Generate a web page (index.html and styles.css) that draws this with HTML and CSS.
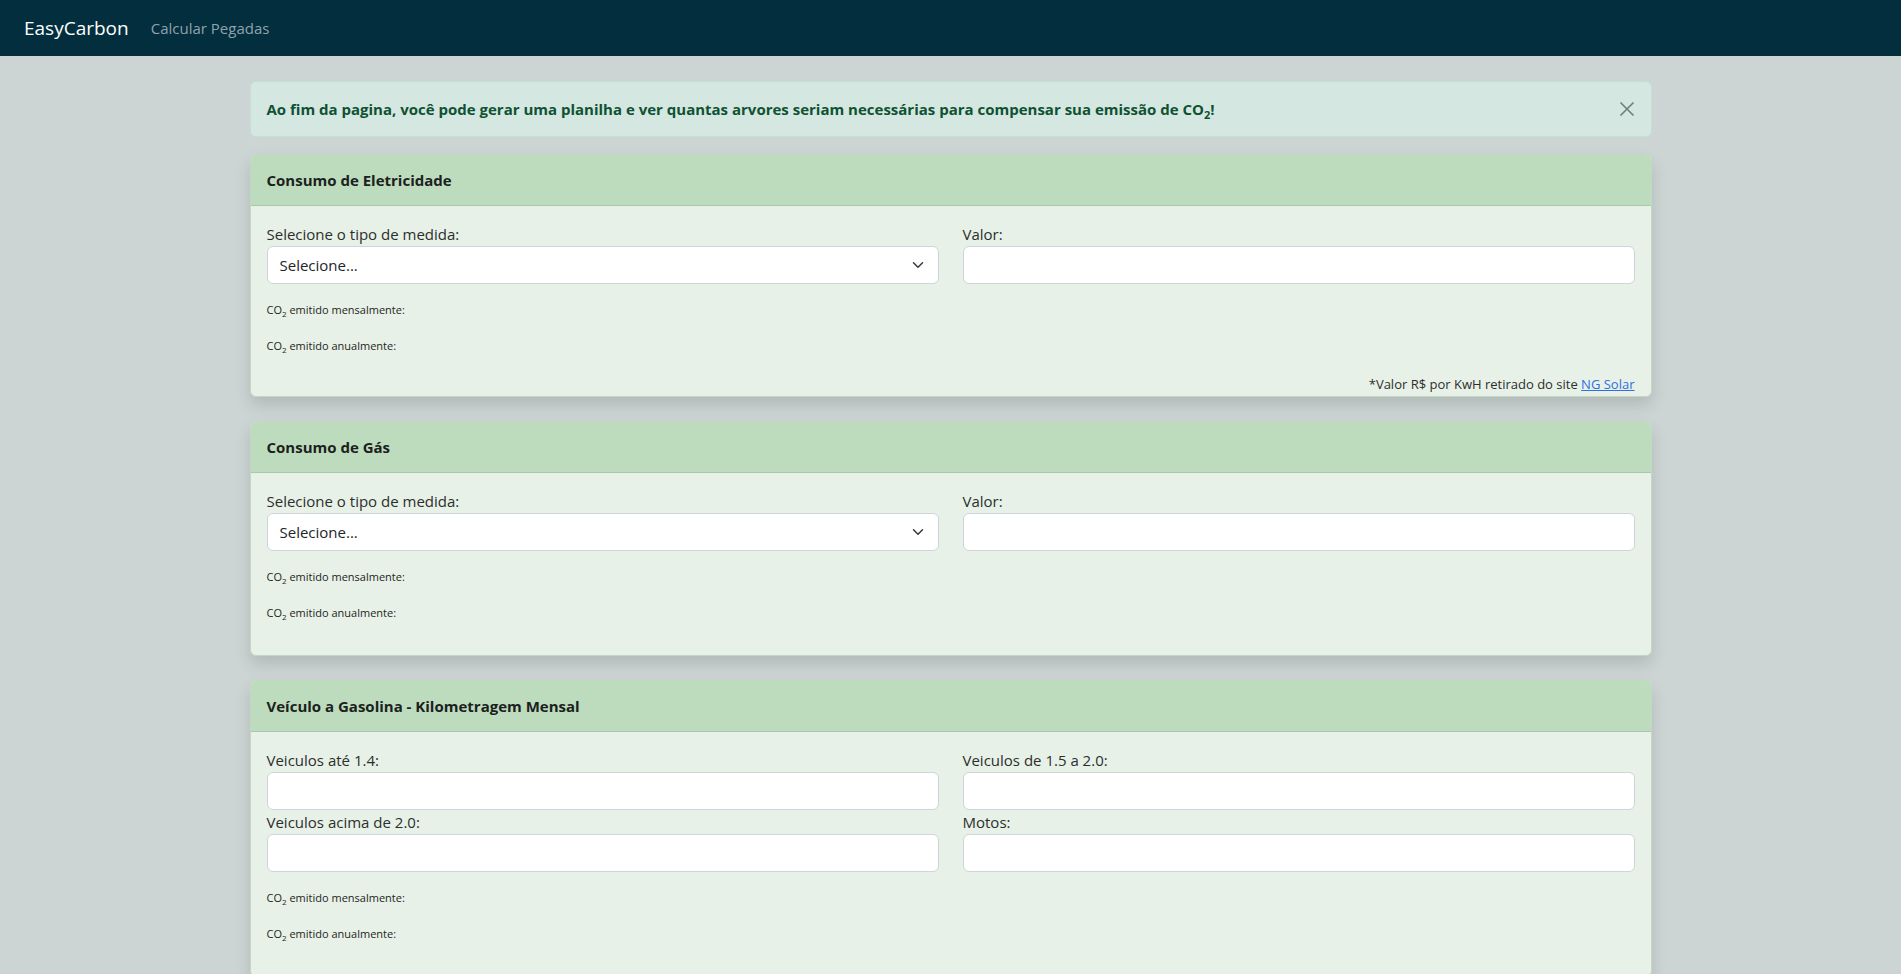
FILE: index.html
```html
<!DOCTYPE html>
<html lang="pt-BR">
<head>
<meta charset="utf-8">
<title>EasyCarbon</title>
<link rel="stylesheet" href="styles.css">
</head>
<body>
<nav class="navbar">
  <a class="brand" href="#">EasyCarbon</a>
  <a class="nav-link" href="#">Calcular Pegadas</a>
</nav>
<main class="container">
  <div class="alert">
    Ao fim da pagina, você pode gerar uma planilha e ver quantas arvores seriam necessárias para compensar sua emissão de CO<sub>2</sub>!
    <button class="btn-close" aria-label="Fechar">
      <svg width="16" height="16" viewBox="0 0 16 16"><path d="M1.5 1.5 L14.5 14.5 M14.5 1.5 L1.5 14.5" stroke="#1e2a26" stroke-width="1.6" fill="none"/></svg>
    </button>
  </div>

  <section class="card">
    <div class="card-header">Consumo de Eletricidade</div>
    <div class="card-body card-body-note">
      <div class="row">
        <div class="col">
          <label class="label">Selecione o tipo de medida:</label>
          <div class="select">Selecione...
            <svg class="chev" width="16" height="12" viewBox="0 0 16 16"><path d="M2 5l6 6 6-6" stroke="#343a40" stroke-width="2" fill="none" stroke-linecap="round" stroke-linejoin="round"/></svg>
          </div>
        </div>
        <div class="col">
          <label class="label">Valor:</label>
          <div class="input"></div>
        </div>
      </div>
      <p class="co2 first">CO<sub>2</sub> emitido mensalmente:</p>
      <p class="co2">CO<sub>2</sub> emitido anualmente:</p>
      <div class="note">*Valor R$ por KwH retirado do site <a href="#">NG Solar</a></div>
    </div>
  </section>

  <section class="card">
    <div class="card-header">Consumo de Gás</div>
    <div class="card-body">
      <div class="row">
        <div class="col">
          <label class="label">Selecione o tipo de medida:</label>
          <div class="select">Selecione...
            <svg class="chev" width="16" height="12" viewBox="0 0 16 16"><path d="M2 5l6 6 6-6" stroke="#343a40" stroke-width="2" fill="none" stroke-linecap="round" stroke-linejoin="round"/></svg>
          </div>
        </div>
        <div class="col">
          <label class="label">Valor:</label>
          <div class="input"></div>
        </div>
      </div>
      <p class="co2 first">CO<sub>2</sub> emitido mensalmente:</p>
      <p class="co2">CO<sub>2</sub> emitido anualmente:</p>
    </div>
  </section>

  <section class="card">
    <div class="card-header">Veículo a Gasolina - Kilometragem Mensal</div>
    <div class="card-body">
      <div class="row">
        <div class="col">
          <label class="label">Veiculos até 1.4:</label>
          <div class="input"></div>
        </div>
        <div class="col">
          <label class="label">Veiculos de 1.5 a 2.0:</label>
          <div class="input"></div>
        </div>
      </div>
      <div class="row">
        <div class="col">
          <label class="label">Veiculos acima de 2.0:</label>
          <div class="input"></div>
        </div>
        <div class="col">
          <label class="label">Motos:</label>
          <div class="input"></div>
        </div>
      </div>
      <p class="co2 first">CO<sub>2</sub> emitido mensalmente:</p>
      <p class="co2">CO<sub>2</sub> emitido anualmente:</p>
    </div>
  </section>
</main>
</body>
</html>
```

FILE: styles.css
```css
* { box-sizing: border-box; }
html, body { margin: 0; padding: 0; }
body {
  background: #ccd5d4;
  font-family: "Open Sans", "Noto Sans", sans-serif;
  font-size: 16px;
  line-height: 24px;
  color: #212529;
}
.navbar {
  height: 56px;
  background: #022e3e;
  display: flex;
  align-items: center;
  padding: 0 24px;
}
.brand {
  color: #fff;
  font-size: 19px;
  text-decoration: none;
  margin-right: 22px;
}
.nav-link {
  color: #8fa3aa;
  font-size: 15px;
  text-decoration: none;
}
.container {
  width: 1402px;
  margin: 25px auto 0;
}
.alert {
  position: relative;
  background: #d4e8e1;
  border: 1px solid #c3e0d2;
  border-radius: 6px;
  padding: 15px 48px 15px 16px;
  color: #0f5132;
  font-weight: 700;
  font-size: 15px;
  margin-bottom: 17px;
}
.alert sub { font-size: 11px; line-height: 0; }
.btn-close {
  position: absolute;
  top: 0;
  right: 0;
  height: 54px;
  width: 48px;
  background: none;
  border: 0;
  padding: 0;
  display: flex;
  align-items: center;
  justify-content: center;
  opacity: 0.55;
}
.card {
  background: #e8f1e8;
  border: 1px solid #c2d8c3;
  border-radius: 6px;
  box-shadow: 0 8px 16px rgba(0,0,0,0.13);
  margin-bottom: 24px;
  overflow: hidden;
}
.card-header {
  background: #bddcbd;
  border-bottom: 1px solid #a9c9aa;
  padding: 13px 16px;
  font-weight: 700;
  font-size: 15px;
  color: #1b211d;
}
.card-body {
  padding: 16px;
}
.card-body-note { padding-bottom: 1px; }
.row {
  display: flex;
  gap: 24px;
}
.col { flex: 1; min-width: 0; }
.label {
  display: block;
  font-size: 15px;
  color: #2b2f2c;
}
.select, .input {
  position: relative;
  height: 38px;
  background: #fff;
  border: 1px solid #ced4da;
  border-radius: 6px;
}
.select {
  padding: 6px 12px;
  font-size: 15px;
  color: #212529;
}
.chev {
  position: absolute;
  right: 12px;
  top: 12px;
}
.co2 {
  margin: 0 0 16px;
  font-size: 11px;
  line-height: 20px;
  color: #1c1f1d;
}
.co2.first { margin-top: 16px; }
.co2 sub { font-size: 8px; line-height: 0; }
.note {
  text-align: right;
  font-size: 13px;
  line-height: 21px;
  padding-top: 2px;
  color: #2b2f2c;
}
.note a { color: #2f6fe0; }
```
